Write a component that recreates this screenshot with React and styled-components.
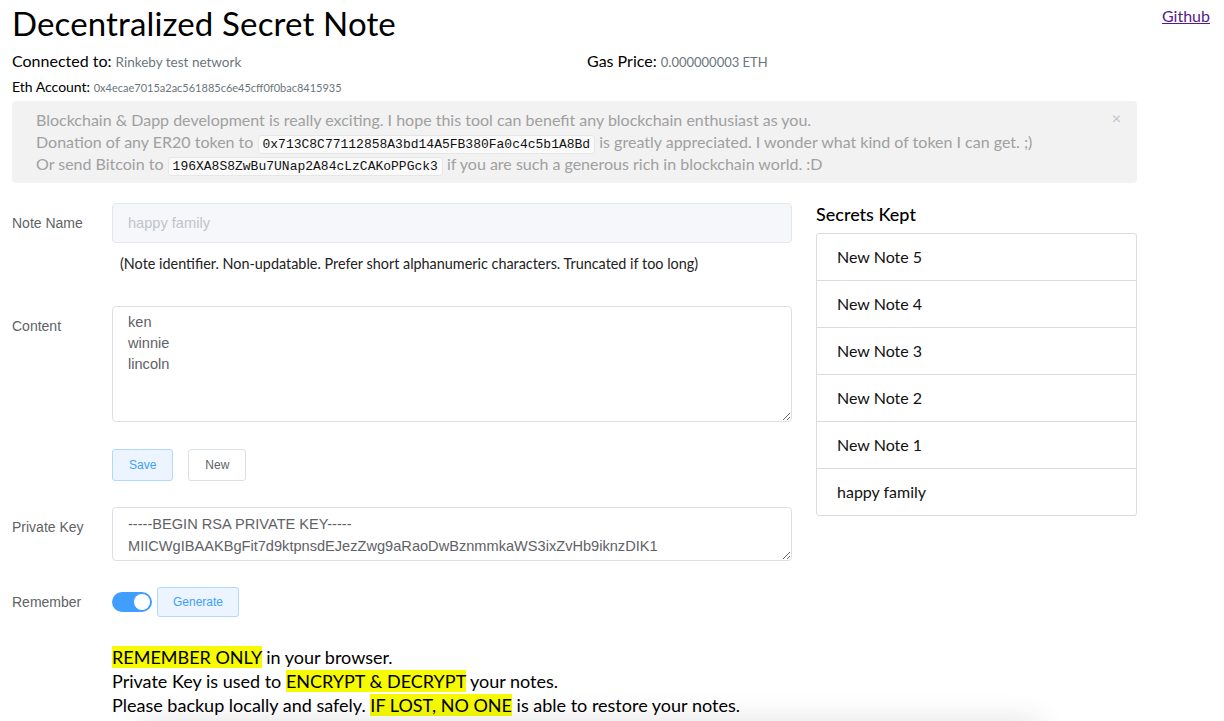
import React from 'react'
import styled, { createGlobalStyle } from 'styled-components'

const GlobalStyle = createGlobalStyle`
  html, body {
    margin: 0;
    padding: 0;
    background: #fff;
  }
  body {
    font-family: Lato, "Noto Sans", sans-serif;
    color: #000;
  }
`

const Page = styled.div`
  padding: 0 14px 0 12px;
  width: 1198px;
`

const Header = styled.div`
  display: flex;
  justify-content: space-between;
  align-items: flex-start;
`

const Title = styled.h1`
  margin: 0;
  padding-top: 3px;
  font-size: 33px;
  letter-spacing: 0.15px;
  line-height: 40px;
  font-weight: 400;
  color: #000;
`

const GithubLink = styled.a`
  margin-top: 6px;
  font-size: 16px;
  line-height: 20px;
  color: #551a8b;
  text-decoration: underline;
`

const InfoRow = styled.div`
  display: grid;
  grid-template-columns: 575px 1fr;
  align-items: center;
  height: ${p => p.h}px;
`

const InfoItem = styled.div`
  font-size: ${p => p.size}px;
  white-space: nowrap;
`

const InfoValue = styled.span`
  font-size: ${p => p.size}px;
  color: #6c757d;
`

const Alert = styled.div`
  position: relative;
  margin-top: 6px;
  width: 1125px;
  box-sizing: border-box;
  padding: 8px 40px 8px 24px;
  background: #f2f2f2;
  border-radius: 4px;
  color: #a0a0a0;
  font-size: 16px;
  line-height: 22px;
`

const Code = styled.code`
  font-family: "Liberation Mono", monospace;
  font-size: 13px;
  line-height: 1;
  color: #111;
  background: #fafafa;
  border: 1px solid #e6e6e6;
  border-radius: 3px;
  padding: 1px 4px;
`

const Close = styled.span`
  position: absolute;
  top: 6px;
  right: 16px;
  color: #c0c4cc;
  font-size: 16px;
`

const Body = styled.div`
  display: flex;
  gap: 24px;
  margin-top: 20px;
`

const Form = styled.div`
  width: 780px;
`

const FormItem = styled.div`
  display: flex;
  margin-bottom: ${p => p.mb}px;
`

const Label = styled.div`
  width: 100px;
  flex: none;
  font-family: "Liberation Sans", Arial, sans-serif;
  font-size: 14px;
  color: #606266;
  line-height: ${p => p.lh || 40}px;
`

const Field = styled.div`
  flex: 1;
  display: flex;
  flex-direction: column;
`

const Input = styled.input`
  height: 40px;
  box-sizing: border-box;
  padding: 0 15px;
  border: 1px solid #e4e7ed;
  border-radius: 4px;
  background: #f5f7fa;
  font-family: "Liberation Sans", Arial, sans-serif;
  font-size: 14.6px;
  color: #c0c4cc;
  outline: none;
  &::placeholder {
    color: #c0c4cc;
  }
`

const Hint = styled.div`
  margin-top: 10px;
  padding-left: 8px;
  font-size: 14.4px;
  line-height: 22px;
  color: #222;
`

const TextArea = styled.textarea`
  height: ${p => p.h}px;
  box-sizing: border-box;
  padding: 5px 15px;
  border: 1px solid #dcdfe6;
  border-radius: 4px;
  font-family: "Liberation Sans", Arial, sans-serif;
  font-size: 14.6px;
  line-height: ${p => p.lh || 21}px;
  color: #606266;
  overflow: hidden;
  outline: none;
`

const Buttons = styled.div`
  display: flex;
  align-items: center;
  gap: ${p => p.gap}px;
`

const Button = styled.button`
  height: ${p => p.h || 32}px;
  padding: 0 ${p => p.px || 15}px;
  border-radius: 3px;
  font-family: "Liberation Sans", Arial, sans-serif;
  font-size: 12px;
  cursor: pointer;
  border: 1px solid ${p => (p.primary ? '#b3d8ff' : '#dcdfe6')};
  background: ${p => (p.primary ? '#ecf5ff' : '#fff')};
  color: ${p => (p.primary ? '#409eff' : '#606266')};
`

const Switch = styled.span`
  position: relative;
  display: inline-block;
  width: 40px;
  height: 20px;
  border-radius: 10px;
  background: #409eff;
  &::after {
    content: '';
    position: absolute;
    top: 2px;
    right: 2px;
    width: 16px;
    height: 16px;
    border-radius: 50%;
    background: #fff;
  }
`

const Notes = styled.div`
  padding-left: 100px;
  font-size: 18px;
  line-height: 24px;
  color: #000;
`

const Mark = styled.mark`
  background: #f6fb00;
  color: #000;
`

const Sidebar = styled.div`
  width: 321px;
`

const SideTitle = styled.div`
  font-size: 18px;
  line-height: 22px;
  font-weight: 500;
  margin-bottom: 8px;
`

const List = styled.ul`
  list-style: none;
  margin: 0;
  padding: 0;
  border: 1px solid #dcdcdc;
  border-radius: 3px;
`

const ListItem = styled.li`
  height: 46px;
  line-height: 46px;
  padding-left: 20px;
  font-size: 16px;
  color: #111;
  & + & {
    border-top: 1px solid #dcdcdc;
  }
`

const BottomShade = styled.div`
  position: fixed;
  left: 140px;
  bottom: -30px;
  width: 900px;
  height: 30px;
  box-shadow: 0 0 30px rgba(0, 0, 0, 0.12);
  background: #fff;
`

const notes = ['New Note 5', 'New Note 4', 'New Note 3', 'New Note 2', 'New Note 1', 'happy family']

export default function App() {
  return (
    <Page>
      <GlobalStyle />
      <Header>
        <Title>Decentralized Secret Note</Title>
        <GithubLink href="#">Github</GithubLink>
      </Header>
      <InfoRow h={34}>
        <InfoItem size={16}>
          Connected to: <InfoValue size={13.5}>Rinkeby test network</InfoValue>
        </InfoItem>
        <InfoItem size={16}>
          Gas Price: <InfoValue size={13}>0.000000003 ETH</InfoValue>
        </InfoItem>
      </InfoRow>
      <InfoRow h={18}>
        <InfoItem size={14}>
          Eth Account: <InfoValue size={11}>0x4ecae7015a2ac561885c6e45cff0f0bac8415935</InfoValue>
        </InfoItem>
      </InfoRow>
      <Alert>
        <Close>×</Close>
        Blockchain &amp; Dapp development is really exciting. I hope this tool can benefit any blockchain enthusiast as you.
        <br />
        Donation of any ER20 token to <Code>0x713C8C77112858A3bd14A5FB380Fa0c4c5b1A8Bd</Code> is greatly appreciated. I wonder what kind of token I can get. ;)
        <br />
        Or send Bitcoin to <Code>196XA8S8ZwBu7UNap2A84cLzCAKoPPGck3</Code> if you are such a generous rich in blockchain world. :D
      </Alert>
      <Body>
        <Form>
          <FormItem mb={31}>
            <Label>Note Name</Label>
            <Field>
              <Input disabled placeholder="happy family" />
              <Hint>(Note identifier. Non-updatable. Prefer short alphanumeric characters. Truncated if too long)</Hint>
            </Field>
          </FormItem>
          <FormItem mb={27}>
            <Label>Content</Label>
            <Field>
              <TextArea h={116} readOnly value={'ken\nwinnie\nlincoln'} />
            </Field>
          </FormItem>
          <FormItem mb={26}>
            <Label />
            <Buttons gap={15}>
              <Button primary px={16}>Save</Button>
              <Button px={16}>New</Button>
            </Buttons>
          </FormItem>
          <FormItem mb={26}>
            <Label>Private Key</Label>
            <Field>
              <TextArea
                h={54}
                lh={22}
                readOnly
                value={'-----BEGIN RSA PRIVATE KEY-----\nMIICWgIBAAKBgFit7d9ktpnsdEJezZwg9aRaoDwBznmmkaWS3ixZvHb9iknzDIK1'}
              />
            </Field>
          </FormItem>
          <FormItem mb={28}>
            <Label lh={30}>Remember</Label>
            <Buttons gap={5}>
              <Switch />
              <Button primary h={30} px={15}>Generate</Button>
            </Buttons>
          </FormItem>
          <Notes>
            <Mark>REMEMBER ONLY</Mark> in your browser.
            <br />
            Private Key is used to <Mark>ENCRYPT &amp; DECRYPT</Mark> your notes.
            <br />
            Please backup locally and safely. <Mark>IF LOST, NO ONE</Mark> is able to restore your notes.
          </Notes>
        </Form>
        <Sidebar>
          <SideTitle>Secrets Kept</SideTitle>
          <List>
            {notes.map(n => (
              <ListItem key={n}>{n}</ListItem>
            ))}
          </List>
        </Sidebar>
      </Body>
      <BottomShade />
    </Page>
  )
}
